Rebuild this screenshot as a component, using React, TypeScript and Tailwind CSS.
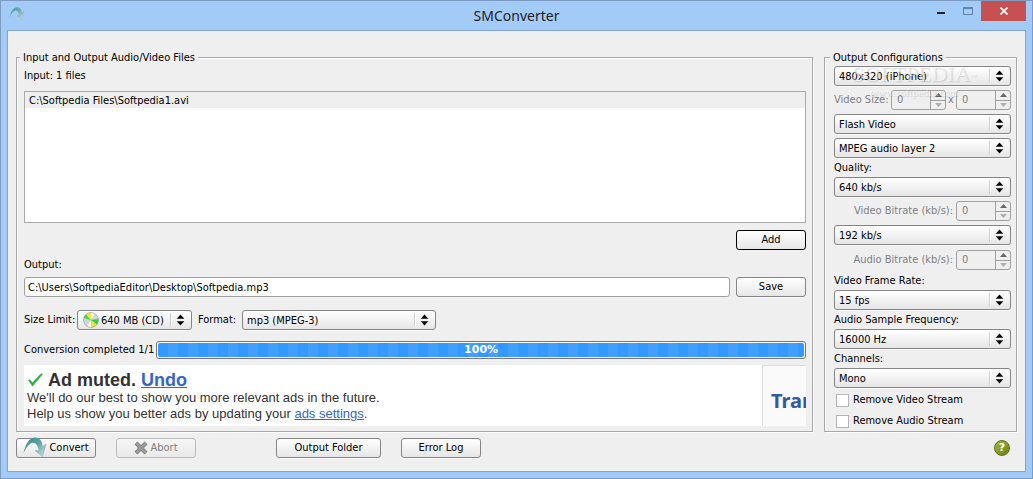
import { useState } from "react";
import type { ReactNode } from "react";

const control =
  "h-5 rounded-[3px] border border-[#858585] bg-gradient-to-b from-white to-[#e6e6e6] shadow-[0_1px_0_#fafafa]";

function SwooshIcon({ className }: { className: string }) {
  return (
    <svg viewBox="0 0 24 22" className={className} aria-hidden="true">
      <defs>
        <linearGradient id="swoosh" x1="0" y1="0" x2="1" y2="1">
          <stop offset="0" stopColor="#2f8a8c" />
          <stop offset="0.5" stopColor="#5fa3a5" />
          <stop offset="1" stopColor="#dde8e6" />
        </linearGradient>
      </defs>
      <path
        d="M0.500 16.500C2 8 6 0.500 12.500 0.500C17 0.500 19.500 5 19.800 9.500L23 7L19.500 19.500L12 13.500L15.500 13C15 8 12 4.500 8.500 6C5 7.500 2.500 12 0.500 16.500Z"
        fill="url(#swoosh)"
      />
      <path d="M19.800 9.500L23 7L19.500 19.500L12 13.500" fill="none" stroke="#8fb3b1" strokeWidth="0.7" />
    </svg>
  );
}

function DiscIcon({ className }: { className: string }) {
  return (
    <svg viewBox="0 0 16 16" className={className} aria-hidden="true">
      <circle cx="8" cy="8" r="7.700" fill="#d2d4d6" />
      <path d="M8 8L0.500 6A7.700 7.700 0 0 1 3 2.200Z" fill="#35e04a" />
      <path d="M8 8L3 2.200A7.700 7.700 0 0 1 8.500 0.400Z" fill="#f2ec2e" />
      <path d="M8 8L8.500 0.400A7.700 7.700 0 0 1 12 1.500Z" fill="#f7f7f7" />
      <path d="M8 8L15.500 7A7.700 7.700 0 0 1 14 12.800Z" fill="#22d83c" />
      <path d="M8 8L14 12.800A7.700 7.700 0 0 1 8 15.700Z" fill="#ece52a" />
      <path d="M8 8L8 15.700A7.700 7.700 0 0 1 4 14.500Z" fill="#f4f4f4" />
      <circle cx="8" cy="8" r="7.500" fill="none" stroke="#9aa0a0" strokeWidth="0.6" />
      <circle cx="8" cy="8" r="1" fill="#fff" stroke="#888" strokeWidth="0.5" />
    </svg>
  );
}

interface DropDownProps {
  value: string;
  label?: string;
  id?: string;
  className?: string;
  icon?: ReactNode;
}

function DropDown({ value, label, id, className = "w-full", icon }: DropDownProps) {
  return (
    <div className={`relative ${className}`}>
      <select
        id={id}
        aria-label={label}
        className={`${control} block w-full appearance-none pr-6 leading-none ${icon ? "pl-[23px]" : "pl-1"}`}
      >
        <option>{value}</option>
      </select>
      {icon}
      <span className="pointer-events-none absolute top-[3px] right-5 h-3.5 w-0.5 border-l border-[#d0d0d0] bg-white" />
      <svg viewBox="0 0 9 12" className="pointer-events-none absolute top-1 right-[7px] h-3 w-[9px]" aria-hidden="true">
        <path d="M4.500 0.500L8.300 4.800H0.700ZM0.700 7.200H8.300L4.500 11.500Z" fill="#000" />
      </svg>
    </div>
  );
}

function Spinner({ id, label }: { id?: string; label?: string }) {
  return (
    <div className="flex h-5 w-[55px] overflow-hidden rounded-[3px] border border-[#a0a0a0]">
      <input id={id} aria-label={label} disabled defaultValue="0" className="min-w-0 flex-1 pl-[5px] text-[#808080]" />
      <div className="flex w-[15px] flex-col border-l border-[#a0a0a0]">
        <button disabled aria-label="Increase" className="flex flex-1 items-center justify-center border-b border-[#a0a0a0]">
          <svg viewBox="0 0 7 4" className="h-1 w-[7px]">
            <path d="M3.500 0L7 4H0Z" fill="#666" />
          </svg>
        </button>
        <button disabled aria-label="Decrease" className="flex flex-1 items-center justify-center">
          <svg viewBox="0 0 7 4" className="h-1 w-[7px]">
            <path d="M0 0H7L3.500 4Z" fill="#b0b0b0" />
          </svg>
        </button>
      </div>
    </div>
  );
}

function Group({ title, className, children }: { title: string; className: string; children: ReactNode }) {
  return (
    <fieldset
      className={`min-w-0 border border-[#a9a9a9] shadow-[1px_1px_0_#fff,inset_1px_1px_0_#fff] ${className}`}
    >
      <legend className="-ml-1 h-3.5 bg-[#efefef] px-[3px] leading-4">{title}</legend>
      {children}
    </fieldset>
  );
}

function FieldLabel({ htmlFor, children }: { htmlFor: string; children: ReactNode }) {
  return (
    <label htmlFor={htmlFor} className="block h-[19px] leading-5">
      {children}
    </label>
  );
}

export default function App() {
  const [removeVideo, setRemoveVideo] = useState(false);
  const [removeAudio, setRemoveAudio] = useState(false);

  return (
    <div className="flex min-h-screen flex-col border border-[#7b9bc2] bg-[#a3cbf8] px-1.5 pb-1.5 font-['DejaVu_Sans_Condensed','DejaVu_Sans',sans-serif] text-[11px] text-black">
      {/* title bar */}
      <header className="relative flex h-[29px] items-center justify-center">
        <SwooshIcon className="absolute top-1.5 left-0.5 h-3.5 w-4 opacity-80" />
        <h1 className="font-['Noto_Sans',sans-serif] text-[14px] text-[#222]">SMConverter</h1>
        <div className="absolute top-0 right-0 flex h-5">
          <button aria-label="Minimize" className="flex w-[27px] items-center justify-center">
            <span className="mt-1 h-0.5 w-2 bg-[#222]" />
          </button>
          <button aria-label="Maximize" className="flex w-[27px] items-center justify-center">
            <span className="h-2 w-2.5 border border-t-2 border-[#6583a6]" />
          </button>
          <button aria-label="Close" className="flex w-[45px] items-center justify-center bg-[#c75050]">
            <svg viewBox="0 0 8 8" className="h-2 w-2">
              <path d="M0.500 0.500L7.500 7.500M7.500 0.500L0.500 7.500" stroke="#fff" strokeWidth="1.700" />
            </svg>
          </button>
        </div>
      </header>

      <main className="flex flex-1 flex-col border border-[#82a5d2] bg-[#efefef] px-2 pt-[19px] pb-[13px]">
        <div className="flex flex-1 gap-[11px]">
          <Group title="Input and Output Audio/Video Files" className="flex flex-1 flex-col pr-1.5 pb-[5px] pl-[7px]">
            <p className="mt-1 leading-4">Input: 1 files</p>
            <ul className="mt-[7px] h-[132px] border border-[#a9a9a9] bg-white" aria-label="Input files">
              <li className="h-4 bg-[#efefef] px-1 leading-[18px]">C:\Softpedia Files\Softpedia1.avi</li>
            </ul>
            <div className="mt-[7px] flex justify-end">
              <button className="h-5 w-[70px] rounded-[3px] border border-black bg-gradient-to-b from-white to-[#e6e6e6]">
                Add
              </button>
            </div>
            <label htmlFor="output" className="mt-[7px] leading-4">
              Output:
            </label>
            <div className="mt-1 flex gap-1.5">
              <input
                id="output"
                defaultValue="C:\Users\SoftpediaEditor\Desktop\Softpedia.mp3"
                className="h-5 min-w-0 flex-1 rounded-[3px] border border-[#a0a0a0] bg-white px-[3px]"
              />
              <button className={`${control} w-[70px]`}>Save</button>
            </div>
            <div className="mt-[13px] flex items-center">
              <label htmlFor="size" className="w-[53px]">
                Size Limit:
              </label>
              <DropDown
                id="size"
                value="640 MB (CD)"
                className="w-[115px]"
                icon={<DiscIcon className="pointer-events-none absolute top-0.5 left-1.5 size-4" />}
              />
              <label htmlFor="format" className="ml-1.5 w-11">
                Format:
              </label>
              <DropDown id="format" value="mp3 (MPEG-3)" className="w-[194px]" />
            </div>
            <div className="mt-[11px] flex items-center gap-0.5">
              <span className="whitespace-nowrap">Conversion completed 1/1</span>
              <div
                role="progressbar"
                aria-valuenow={100}
                aria-label="Conversion progress"
                className="h-[18px] flex-1 rounded-[3px] border border-[#777] bg-white p-px"
              >
                <div className="flex h-full items-center justify-center rounded-xs bg-[repeating-linear-gradient(90deg,#3399ff_0px,#3399ff_10px,#429fff_10px,#429fff_20px)] font-['DejaVu_Sans',sans-serif] font-bold text-white">
                  100%
                </div>
              </div>
            </div>
            <div className="mt-1.5 flex flex-1 bg-white font-['Liberation_Sans',sans-serif] text-[#333]">
              <div className="flex-1 pt-1 pl-[3px] text-[13px] leading-4">
                <div className="flex h-[21px] items-center text-[18px] font-bold">
                  <svg viewBox="0 0 16 14" className="mr-[5px] h-3.5 w-4" aria-hidden="true">
                    <path d="M1 7L3 6.500L5.500 9.500L14 0.500L16 1L5.500 13.500Z" fill="#2fae4a" />
                  </svg>
                  Ad muted.&nbsp;
                  <a href="#undo" className="text-[#3366cc] underline">
                    Undo
                  </a>
                </div>
                <p>We'll do our best to show you more relevant ads in the future.</p>
                <p>
                  Help us show you better ads by updating your{" "}
                  <a href="#settings" className="text-[#3366cc] underline">
                    ads settings
                  </a>
                  .
                </p>
              </div>
              <div className="flex w-11 items-center overflow-hidden border-t border-l border-[#ddd] bg-[#fafafa] pt-2.5 pl-2 font-['Noto_Sans',sans-serif] text-[20px] font-bold text-[#3558a5]">
                Tran
              </div>
            </div>
          </Group>

          <Group title="Output Configurations" className="relative w-[193px] pr-[5px] pb-0.5 pl-[9px]">
            <div className="mt-0.5 flex flex-col gap-1">
              <DropDown value="480x320 (iPhone)" label="Preset" />
              <div className="flex items-center justify-between text-[#808080]">
                <span className="w-[55px] whitespace-nowrap">Video Size:</span>
                <Spinner label="Video width" />
                <span>x</span>
                <Spinner label="Video height" />
              </div>
              <DropDown value="Flash Video" label="Video codec" />
              <DropDown value="MPEG audio layer 2" label="Audio codec" />
            </div>
            <FieldLabel htmlFor="quality">Quality:</FieldLabel>
            <div className="flex flex-col gap-1">
              <DropDown id="quality" value="640 kb/s" />
              <div className="flex items-center justify-end gap-[3px] text-[#808080]">
                <label htmlFor="vbit">Video Bitrate (kb/s):</label>
                <Spinner id="vbit" />
              </div>
              <DropDown value="192 kb/s" label="Audio quality" />
              <div className="flex items-center justify-end gap-[3px] py-px text-[#808080]">
                <label htmlFor="abit">Audio Bitrate (kb/s):</label>
                <Spinner id="abit" />
              </div>
            </div>
            <FieldLabel htmlFor="fps">Video Frame Rate:</FieldLabel>
            <DropDown id="fps" value="15 fps" />
            <FieldLabel htmlFor="freq">Audio Sample Frequency:</FieldLabel>
            <DropDown id="freq" value="16000 Hz" />
            <FieldLabel htmlFor="channels">Channels:</FieldLabel>
            <DropDown id="channels" value="Mono" />
            <div className="mt-1.5 flex flex-col gap-2 pl-0.5">
              <label className="flex h-[13px] items-center gap-1">
                <input
                  type="checkbox"
                  checked={removeVideo}
                  onChange={(e) => setRemoveVideo(e.target.checked)}
                  className="size-[13px] appearance-none border border-[#b4b4b4] bg-white checked:bg-[#3399ff]"
                />
                Remove Video Stream
              </label>
              <label className="flex h-[13px] items-center gap-1">
                <input
                  type="checkbox"
                  checked={removeAudio}
                  onChange={(e) => setRemoveAudio(e.target.checked)}
                  className="size-[13px] appearance-none border border-[#b4b4b4] bg-white checked:bg-[#3399ff]"
                />
                Remove Audio Stream
              </label>
            </div>
            {/* watermark */}
            <div className="pointer-events-none absolute -top-0.5 left-6 w-[130px] text-center font-['Liberation_Serif',serif] whitespace-nowrap text-white/50 [text-shadow:1px_1px_1px_rgba(0,0,0,0.15)]">
              <div className="text-[22px] leading-6">
                SOFTPEDIA<sup className="text-[6px]">™</sup>
              </div>
              <div className="text-[11px] leading-3">www.softpedia.com</div>
            </div>
          </Group>
        </div>

        <footer className="mt-1.5 flex items-center">
          <button className={`${control} flex w-20 items-center justify-center gap-0.5`}>
            <SwooshIcon className="-my-1 h-[22px] w-6" />
            Convert
          </button>
          <button
            disabled
            className="ml-5 flex h-5 w-20 items-center justify-center gap-0.5 rounded-[3px] border border-[#bababa] bg-gradient-to-b from-[#f6f6f6] to-[#e9e9e9] text-[#808080]"
          >
            <svg viewBox="0 0 14 14" className="size-3.5" aria-hidden="true">
              <path d="M2 2L12 12M12 2L2 12" stroke="#7d7d7d" strokeWidth="4.200" />
              <path d="M2 2L12 12M12 2L2 12" stroke="#9a9a9a" strokeWidth="2.600" />
            </svg>
            Abort
          </button>
          <button className={`${control} ml-20 w-[105px]`}>Output Folder</button>
          <button className={`${control} ml-5 w-20`}>Error Log</button>
          <button
            aria-label="Help"
            className="mr-[7px] ml-auto flex size-4 items-center justify-center rounded-full border border-[#5c701c] bg-gradient-to-br from-[#a3b83e] to-[#6a8114] font-['DejaVu_Sans',sans-serif] font-bold text-white"
          >
            ?
          </button>
        </footer>
      </main>
    </div>
  );
}
